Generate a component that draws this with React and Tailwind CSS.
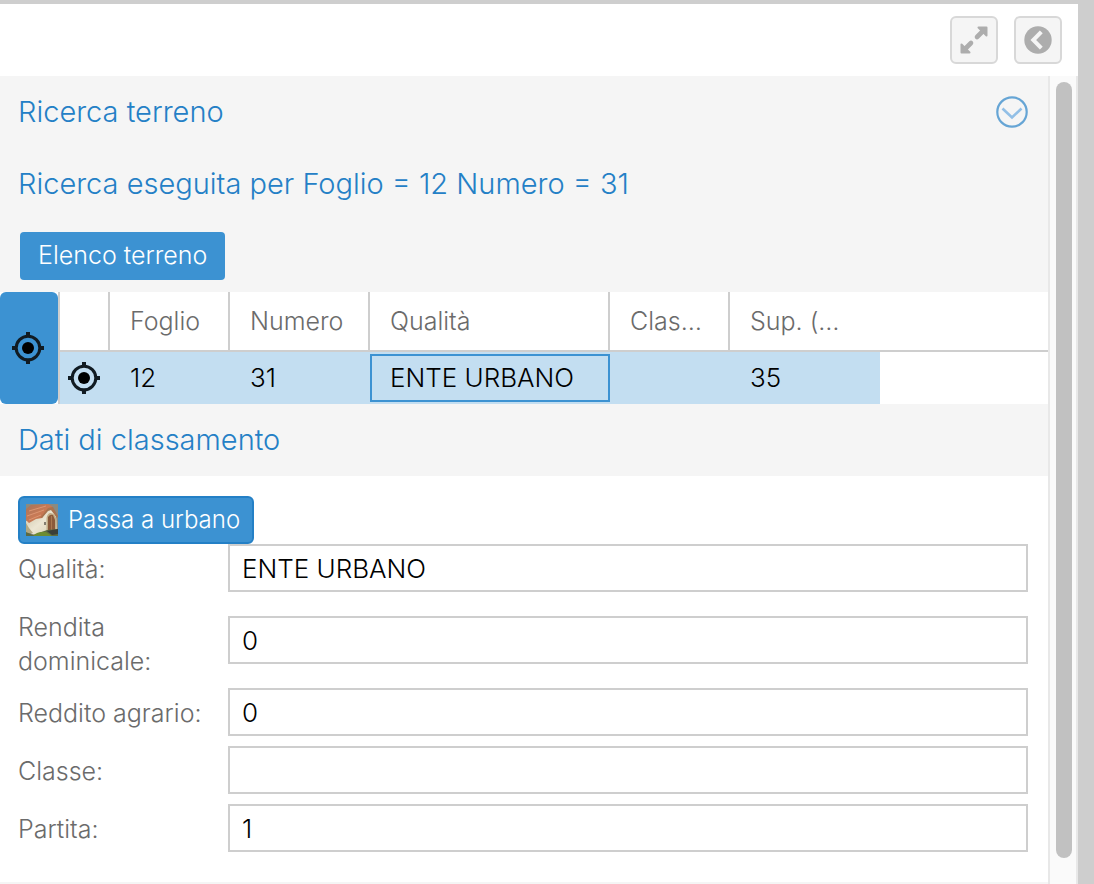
import { useState } from 'react';

const columns = [
  { key: 'foglio', label: 'Foglio', value: '12' },
  { key: 'numero', label: 'Numero', value: '31' },
  { key: 'qualita', label: 'Qualità', value: 'ENTE URBANO', selected: true },
  { key: 'classe', label: 'Clas…', value: '' },
  { key: 'superficie', label: 'Sup. (…', value: '35', last: true },
];

const fields = [
  { id: 'qualita', label: 'Qualità:', value: 'ENTE URBANO' },
  { id: 'rendita', label: 'Rendita dominicale:', value: '0' },
  { id: 'reddito', label: 'Reddito agrario:', value: '0' },
  { id: 'classe', label: 'Classe:', value: '' },
  { id: 'partita', label: 'Partita:', value: '1' },
];

function TargetIcon() {
  return (
    <svg aria-hidden="true" className="h-8 w-8 shrink-0" viewBox="0 0 32 32">
      <circle cx="16" cy="16" r="6" fill="#000" />
      <circle cx="16" cy="16" r="11.8" fill="none" stroke="#111b22" strokeWidth="3" />
      <path d="M16 0v5M16 27v5M0 16h5M27 16h5" stroke="#111b22" strokeWidth="4" />
    </svg>
  );
}

function ExpandIcon() {
  return (
    <svg
      aria-hidden="true"
      className="h-7 w-7"
      viewBox="0 0 28 28"
      fill="#adadad"
      stroke="#adadad"
      strokeLinejoin="round"
      strokeLinecap="round"
    >
      <path d="M18.500 1.500h8v8z" strokeWidth="2" />
      <path d="M23 5L17 11" strokeWidth="4.600" />
      <path d="M1.500 18.500v8h8z" strokeWidth="2" />
      <path d="M5 23L11 17" strokeWidth="4.600" />
    </svg>
  );
}

function BackIcon() {
  return (
    <svg aria-hidden="true" className="h-7 w-7" viewBox="0 0 28 28">
      <circle cx="14" cy="14" r="13.7" fill="#adadad" />
      <path d="M17.300 5.800L9.300 14l8 8.200" fill="none" stroke="#f5f5f5" strokeWidth="4" />
    </svg>
  );
}

function CollapseIcon() {
  return (
    <svg aria-hidden="true" className="h-8 w-8" viewBox="0 0 32 32" fill="none">
      <circle cx="16" cy="16" r="14.700" stroke="#66a5d5" strokeWidth="2.200" />
      <path d="M6.500 12.500L16 21.500l9.500-9" stroke="#92bfe6" strokeWidth="2.600" />
    </svg>
  );
}

function HouseIcon() {
  return (
    <svg aria-hidden="true" className="h-8 w-8 shrink-0" viewBox="0 0 32 32">
      <defs>
        <linearGradient id="roof" x1="0" y1="0" x2="1" y2="1">
          <stop offset="0" stopColor="#a5745c" />
          <stop offset="0.5" stopColor="#c97a55" />
          <stop offset="1" stopColor="#b0623f" />
        </linearGradient>
        <linearGradient id="wall" x1="0" y1="0" x2="1" y2="1">
          <stop offset="0" stopColor="#c9c1a4" />
          <stop offset="0.5" stopColor="#ece6d3" />
          <stop offset="1" stopColor="#d8cfb2" />
        </linearGradient>
      </defs>
      <rect width="32" height="32" fill="#8b8a80" />
      <path d="M0 17l14-6 6-6h5l5 7 1 14-12 2-10 3-9-4z" fill="url(#wall)" />
      <path d="M0 5l5-4 17-1 5 3-5 3-6 8-6 1-7 4-3-3z" fill="url(#roof)" />
      <path d="M3 7l17-5M1 12l17-6M3 16l12-5" stroke="#dc9672" />
      <path d="M15 13l7-9 5-1 5 9-1 2-6-8-3 1-6 7z" fill="#a8734f" />
      <path d="M20.500 27V14q1-5 4-5 4 0 6 6v12z" fill="#c1ad87" />
      <path d="M22 26V13q2-3 5-2l2 5v10z" fill="#8b5a3b" />
      <path d="M25.500 12v14" stroke="#a97850" />
      <path d="M19 18v3" stroke="#625d50" strokeWidth="1.500" />
      <path d="M0 19l3 5 4 5H0z" fill="#b3a883" />
      <path d="M0 28l7 3 6-2 8-3 11-1v7H0z" fill="#5c6a43" />
      <path d="M7 32q5-5 13-4l6 4z" fill="#6d8c32" />
      <path d="M21 27l11-2v5l-6 1z" fill="#3a3f3a" />
    </svg>
  );
}

function TerrenoTable() {
  return (
    <div className="flex bg-white">
      <button
        aria-label="Centra tutti"
        className="flex w-[58px] shrink-0 items-center rounded-md bg-[#3c92d2] pl-3"
        type="button"
      >
        <TargetIcon />
      </button>
      <div className="min-w-0 flex-1 border-l-2 border-[#cecece]">
        <table className="w-full table-fixed border-separate border-spacing-0 text-left leading-8">
          <colgroup>
            <col className="w-[50px]" />
            <col className="w-[120px]" />
            <col className="w-[140px]" />
            <col className="w-[240px]" />
            <col className="w-[120px]" />
            <col className="w-[150px]" />
            <col />
          </colgroup>
          <thead>
            <tr className="h-[60px] text-[25px] text-[#6b6b6b]">
              <td className="border-r-2 border-b-2 border-[#cecece]" />
              {columns.map((column) => (
                <th
                  className={
                    column.last
                      ? 'border-b-2 border-[#cecece] pl-5 font-light whitespace-nowrap'
                      : 'border-r-2 border-b-2 border-[#cecece] pl-5 font-light whitespace-nowrap'
                  }
                  key={column.key}
                  scope="col"
                >
                  {column.label}
                </th>
              ))}
              <td className="border-b-2 border-[#cecece]" />
            </tr>
          </thead>
          <tbody>
            <tr className="h-[52px] text-[26px] text-black">
              <td className="bg-[#c3def1] p-0">
                <button aria-label="Centra" className="flex pl-2" type="button">
                  <TargetIcon />
                </button>
              </td>
              {columns.map((column) => (
                <td
                  className={
                    column.selected
                      ? 'bg-[#c3def1] px-0 py-0.5'
                      : 'bg-[#c3def1] py-0 pr-0 pl-5'
                  }
                  key={column.key}
                >
                  {column.selected ? (
                    <div className="flex h-12 items-center border-2 border-[#3c92d2] pl-[18px] whitespace-nowrap">
                      {column.value}
                    </div>
                  ) : (
                    column.value
                  )}
                </td>
              ))}
              <td />
            </tr>
          </tbody>
        </table>
      </div>
    </div>
  );
}

function Field({ field }) {
  const [value, setValue] = useState(field.value);

  return (
    <div className="flex items-center">
      <label
        className="w-[210px] shrink-0 self-start pt-2 pr-4 text-[25px] leading-[34px] text-[#6b6b6b]"
        htmlFor={field.id}
      >
        {field.label}
      </label>
      <input
        className="h-12 min-w-0 flex-1 border-2 border-[#cecece] bg-white px-3 text-[26px] font-light text-black outline-none"
        id={field.id}
        onChange={(event) => setValue(event.target.value)}
        type="text"
        value={value}
      />
    </div>
  );
}

function App() {
  return (
    <div className="flex min-h-screen flex-col border-t-4 border-r-16 border-[#cecece] bg-white font-['Inter',sans-serif] font-light">
      <header className="flex h-[72px] shrink-0 justify-end gap-4 px-4 pt-3">
        <button
          aria-label="Espandi"
          className="flex h-12 w-12 items-center justify-center rounded-md border-2 border-[#d8d8d8] bg-[#f5f5f5]"
          type="button"
        >
          <ExpandIcon />
        </button>
        <button
          aria-label="Indietro"
          className="flex h-12 w-12 items-center justify-center rounded-md border-2 border-[#d8d8d8] bg-[#f5f5f5]"
          type="button"
        >
          <BackIcon />
        </button>
      </header>

      <div className="flex flex-1">
        <main className="min-w-0 flex-1 bg-[#f5f5f5]">
          <div className="flex h-[72px] items-center justify-between pr-5 pl-[18px]">
            <h1 className="text-[29px] text-[#2480c6]">Ricerca terreno</h1>
            <button aria-label="Comprimi" type="button">
              <CollapseIcon />
            </button>
          </div>
          <h2 className="flex h-[72px] items-center pl-[18px] text-[29px] text-[#2480c6]">
            Ricerca eseguita per Foglio = 12 Numero = 31
          </h2>
          <div className="px-5 py-3">
            <button
              className="flex h-12 items-center rounded-sm bg-[#3c92d2] px-[18px] text-[25px] text-white"
              type="button"
            >
              Elenco terreno
            </button>
          </div>

          <TerrenoTable />

          <h2 className="flex h-[72px] items-center pl-[18px] text-[29px] text-[#2480c6]">
            Dati di classamento
          </h2>
          <form className="bg-white pt-5 pr-5 pb-[30px] pl-[18px]">
            <button
              className="flex h-12 items-center gap-2.5 rounded-md border-2 border-[#2480c6] bg-[#3c92d2] pr-3 pl-1.5 text-[24px] text-white"
              type="button"
            >
              <HouseIcon />
              Passa a urbano
            </button>
            <div className="flex flex-col gap-2.5">
              {fields.map((field) => (
                <Field field={field} key={field.id} />
              ))}
            </div>
          </form>
        </main>

        <div className="flex w-[30px] shrink-0 flex-col border-x-2 border-[#e8e8e8] bg-[#fafafa] px-1.5 pt-1.5 pb-[26px]">
          <div className="w-4 flex-1 rounded-full bg-[#c1c1c1]" />
        </div>
      </div>
    </div>
  );
}

export default App;
